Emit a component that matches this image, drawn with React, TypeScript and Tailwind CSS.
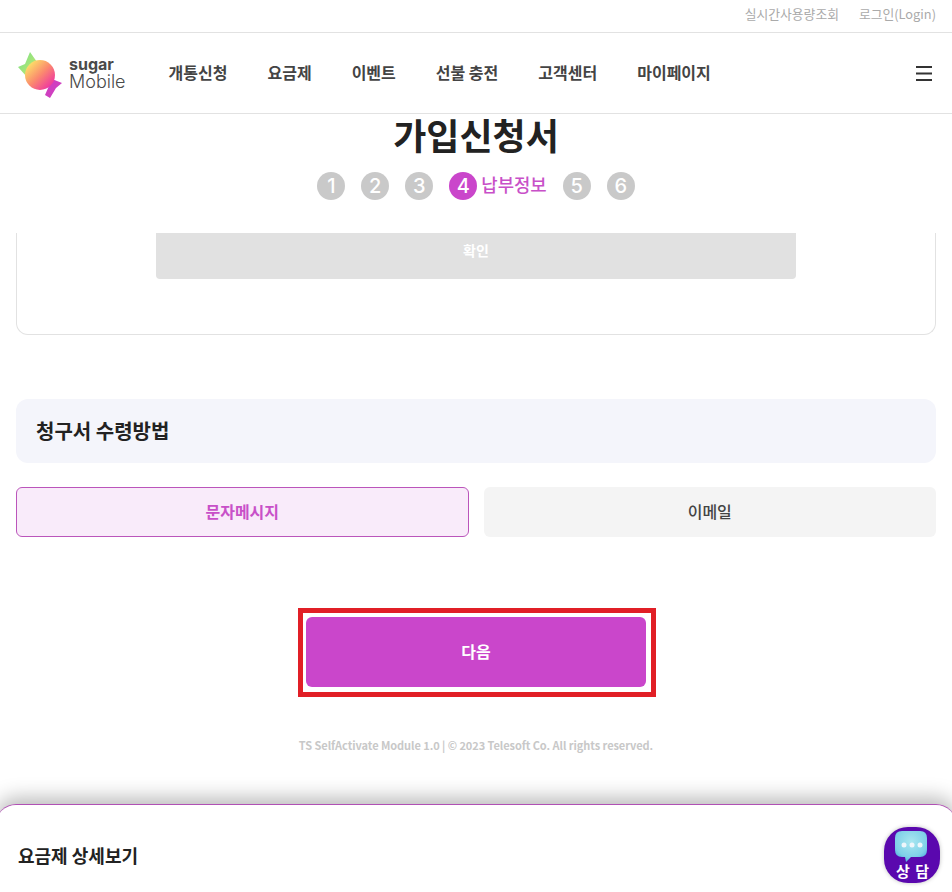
import React from "react";

const font = "font-['Noto_Sans_CJK_KR','Noto_Sans',sans-serif]";
const navItems = ["개통신청", "요금제", "이벤트", "선불 충전", "고객센터", "마이페이지"];

function Logo() {
  return (
    <div className="flex items-center gap-[5px]">
      <svg width="48" height="50" viewBox="0 0 48 50" className="mt-[4px]">
        <defs>
          <linearGradient id="candy" x1="0.1" y1="0.1" x2="0.9" y2="0.9">
            <stop offset="0" stopColor="#fde767" />
            <stop offset="0.5" stopColor="#fb8a6e" />
            <stop offset="1" stopColor="#ee2fa5" />
          </linearGradient>
          <linearGradient id="wrapA" x1="0" y1="0" x2="1" y2="1">
            <stop offset="0" stopColor="#72e08a" />
            <stop offset="1" stopColor="#cfe96c" />
          </linearGradient>
        </defs>
        <path d="M2 17 L9 14 L14 2 L21 12 L11 27 Z" fill="url(#wrapA)" />
        <path d="M46 33 L40 38 L34 48 L29 45 L36 29 Z" fill="#cf3fc0" />
        <circle cx="24" cy="25" r="15" fill="url(#candy)" />
      </svg>
      <div className="flex flex-col gap-[2px] text-[#4a4a4a] font-['Inter',sans-serif] leading-[16px]">
        <span className="text-[16px] font-bold">sugar</span>
        <span className="text-[18px] font-light">Mobile</span>
      </div>
    </div>
  );
}

function Steps() {
  const gray = "w-7 h-7 rounded-full bg-[#c9c9c9] text-white text-[20px] font-['Inter',sans-serif] font-medium flex items-center justify-center";
  return (
    <div className="flex items-center justify-center gap-4 h-7 mt-[18px]">
      {[1, 2, 3].map((n) => (
        <span key={n} className={gray}>{n}</span>
      ))}
      <span className="flex items-center gap-1">
        <span className="w-7 h-7 rounded-full bg-[#ca46cb] text-white text-[20px] font-['Inter',sans-serif] font-medium flex items-center justify-center">4</span>
        <span className="text-[#c850c8] text-[17.8px] font-medium leading-6 -mt-[5px]">납부정보</span>
      </span>
      {[5, 6].map((n) => (
        <span key={n} className={gray}>{n}</span>
      ))}
    </div>
  );
}

export default function App() {
  return (
    <div className={`${font} relative w-[952px] h-[892px] overflow-hidden bg-white`}>
      <div className="h-[33px] border-b border-[#e2e2e2] flex items-center justify-end gap-5 pr-4 pb-[5px] text-[12.8px] text-[#aaaaaa]">
        <span>실시간사용량조회</span>
        <span>로그인(Login)</span>
      </div>
      <header className="h-[81px] border-b border-[#e2e2e2] flex items-center pl-4 pr-5">
        <Logo />
        <nav className="flex items-center gap-10 ml-[43px] pb-[2px] text-[16px] font-bold text-[#444]">
          {navItems.map((item) => (
            <span key={item}>{item}</span>
          ))}
        </nav>
        <svg width="16" height="15" viewBox="0 0 16 15" className="ml-auto text-[#333]">
          <path d="M0 1h16M0 7.5h16M0 14h16" stroke="currentColor" strokeWidth="2" />
        </svg>
      </header>

      <div className="h-[119px]">
        <h1 className="text-[36px] leading-[40px] font-bold text-[#222] text-center">가입신청서</h1>
        <Steps />
      </div>

      <div className="mx-4 h-[102px] border border-t-0 border-[#e2e2e2] rounded-b-xl px-[139px]">
        <div className="h-[46px] bg-[#e1e1e1] rounded-b-[4px] pb-3 flex items-center justify-center text-white text-[14px] font-bold">확인</div>
      </div>

      <div className="mx-4 mt-[64px] h-16 bg-[#f4f5fb] rounded-xl flex items-center px-5 text-[20px] font-bold text-[#222]">청구서 수령방법</div>

      <div className="mx-4 mt-6 grid grid-cols-2 gap-[15px]">
        <div className="h-[50px] pb-[2px] rounded-md border border-[#bb55bb] bg-[#f9ebfa] text-[#c850c8] text-[16px] font-bold flex items-center justify-center">문자메시지</div>
        <div className="h-[50px] pb-[2px] rounded-md bg-[#f4f4f4] text-[#444] text-[16px] font-medium flex items-center justify-center">이메일</div>
      </div>

      <div className="mt-[71px] ml-[298px] w-[358px] h-[89px] border-[5px] border-[#e11f26] pt-[4px] pl-[3px]">
        <div className="w-[340px] h-[70px] pb-[2px] rounded-md bg-[#ca46cb] text-white text-[16px] font-bold flex items-center justify-center">다음</div>
      </div>

      <p className="mt-[39px] text-center text-[11px] leading-[18px] font-bold tracking-[-0.06px] text-[#c8c8c8]">TS SelfActivate Module 1.0 | © 2023 Telesoft Co. All rights reserved.</p>

      <div className="mt-[50px] -mx-1 h-[120px] border-t border-[#b050b4] rounded-t-[20px] shadow-[0_-6px_20px_rgba(0,0,0,0.28)] bg-white pl-[22px] pt-[38px]">
        <span className="text-[18px] font-bold text-[#222] leading-6 block">요금제 상세보기</span>
      </div>

      {/* floating chat button */}
      <div className="absolute left-[884px] top-[827px] w-14 h-14 rounded-[24px] bg-[#5a08ae] shadow-[0_0_4px_rgba(0,0,0,0.25)] overflow-hidden">
        <svg width="34" height="34" viewBox="0 0 34 34" className="ml-[10px] mt-[3px]">
          <defs>
            <radialGradient id="bubble" cx="0.5" cy="0.35" r="0.7">
              <stop offset="0" stopColor="#a9e7f0" />
              <stop offset="0.7" stopColor="#7fd0e8" />
              <stop offset="1" stopColor="#4aa8dc" />
            </radialGradient>
          </defs>
          <path d="M8 1 H26 Q33 1 33 8 V20 Q33 27 26 27 H17 L12 32 L11 27 H8 Q1 27 1 20 V8 Q1 1 8 1 Z" fill="url(#bubble)" />
          <circle cx="10" cy="15" r="2.5" fill="#eef6fb" />
          <circle cx="18" cy="15" r="2.5" fill="#eef6fb" />
          <circle cx="26" cy="15" r="2.5" fill="#eef6fb" />
        </svg>
        <span className="absolute left-[12px] top-[34px] text-white text-[15px] font-bold leading-5 tracking-[1px] whitespace-nowrap">상 담</span>
      </div>
    </div>
  );
}
